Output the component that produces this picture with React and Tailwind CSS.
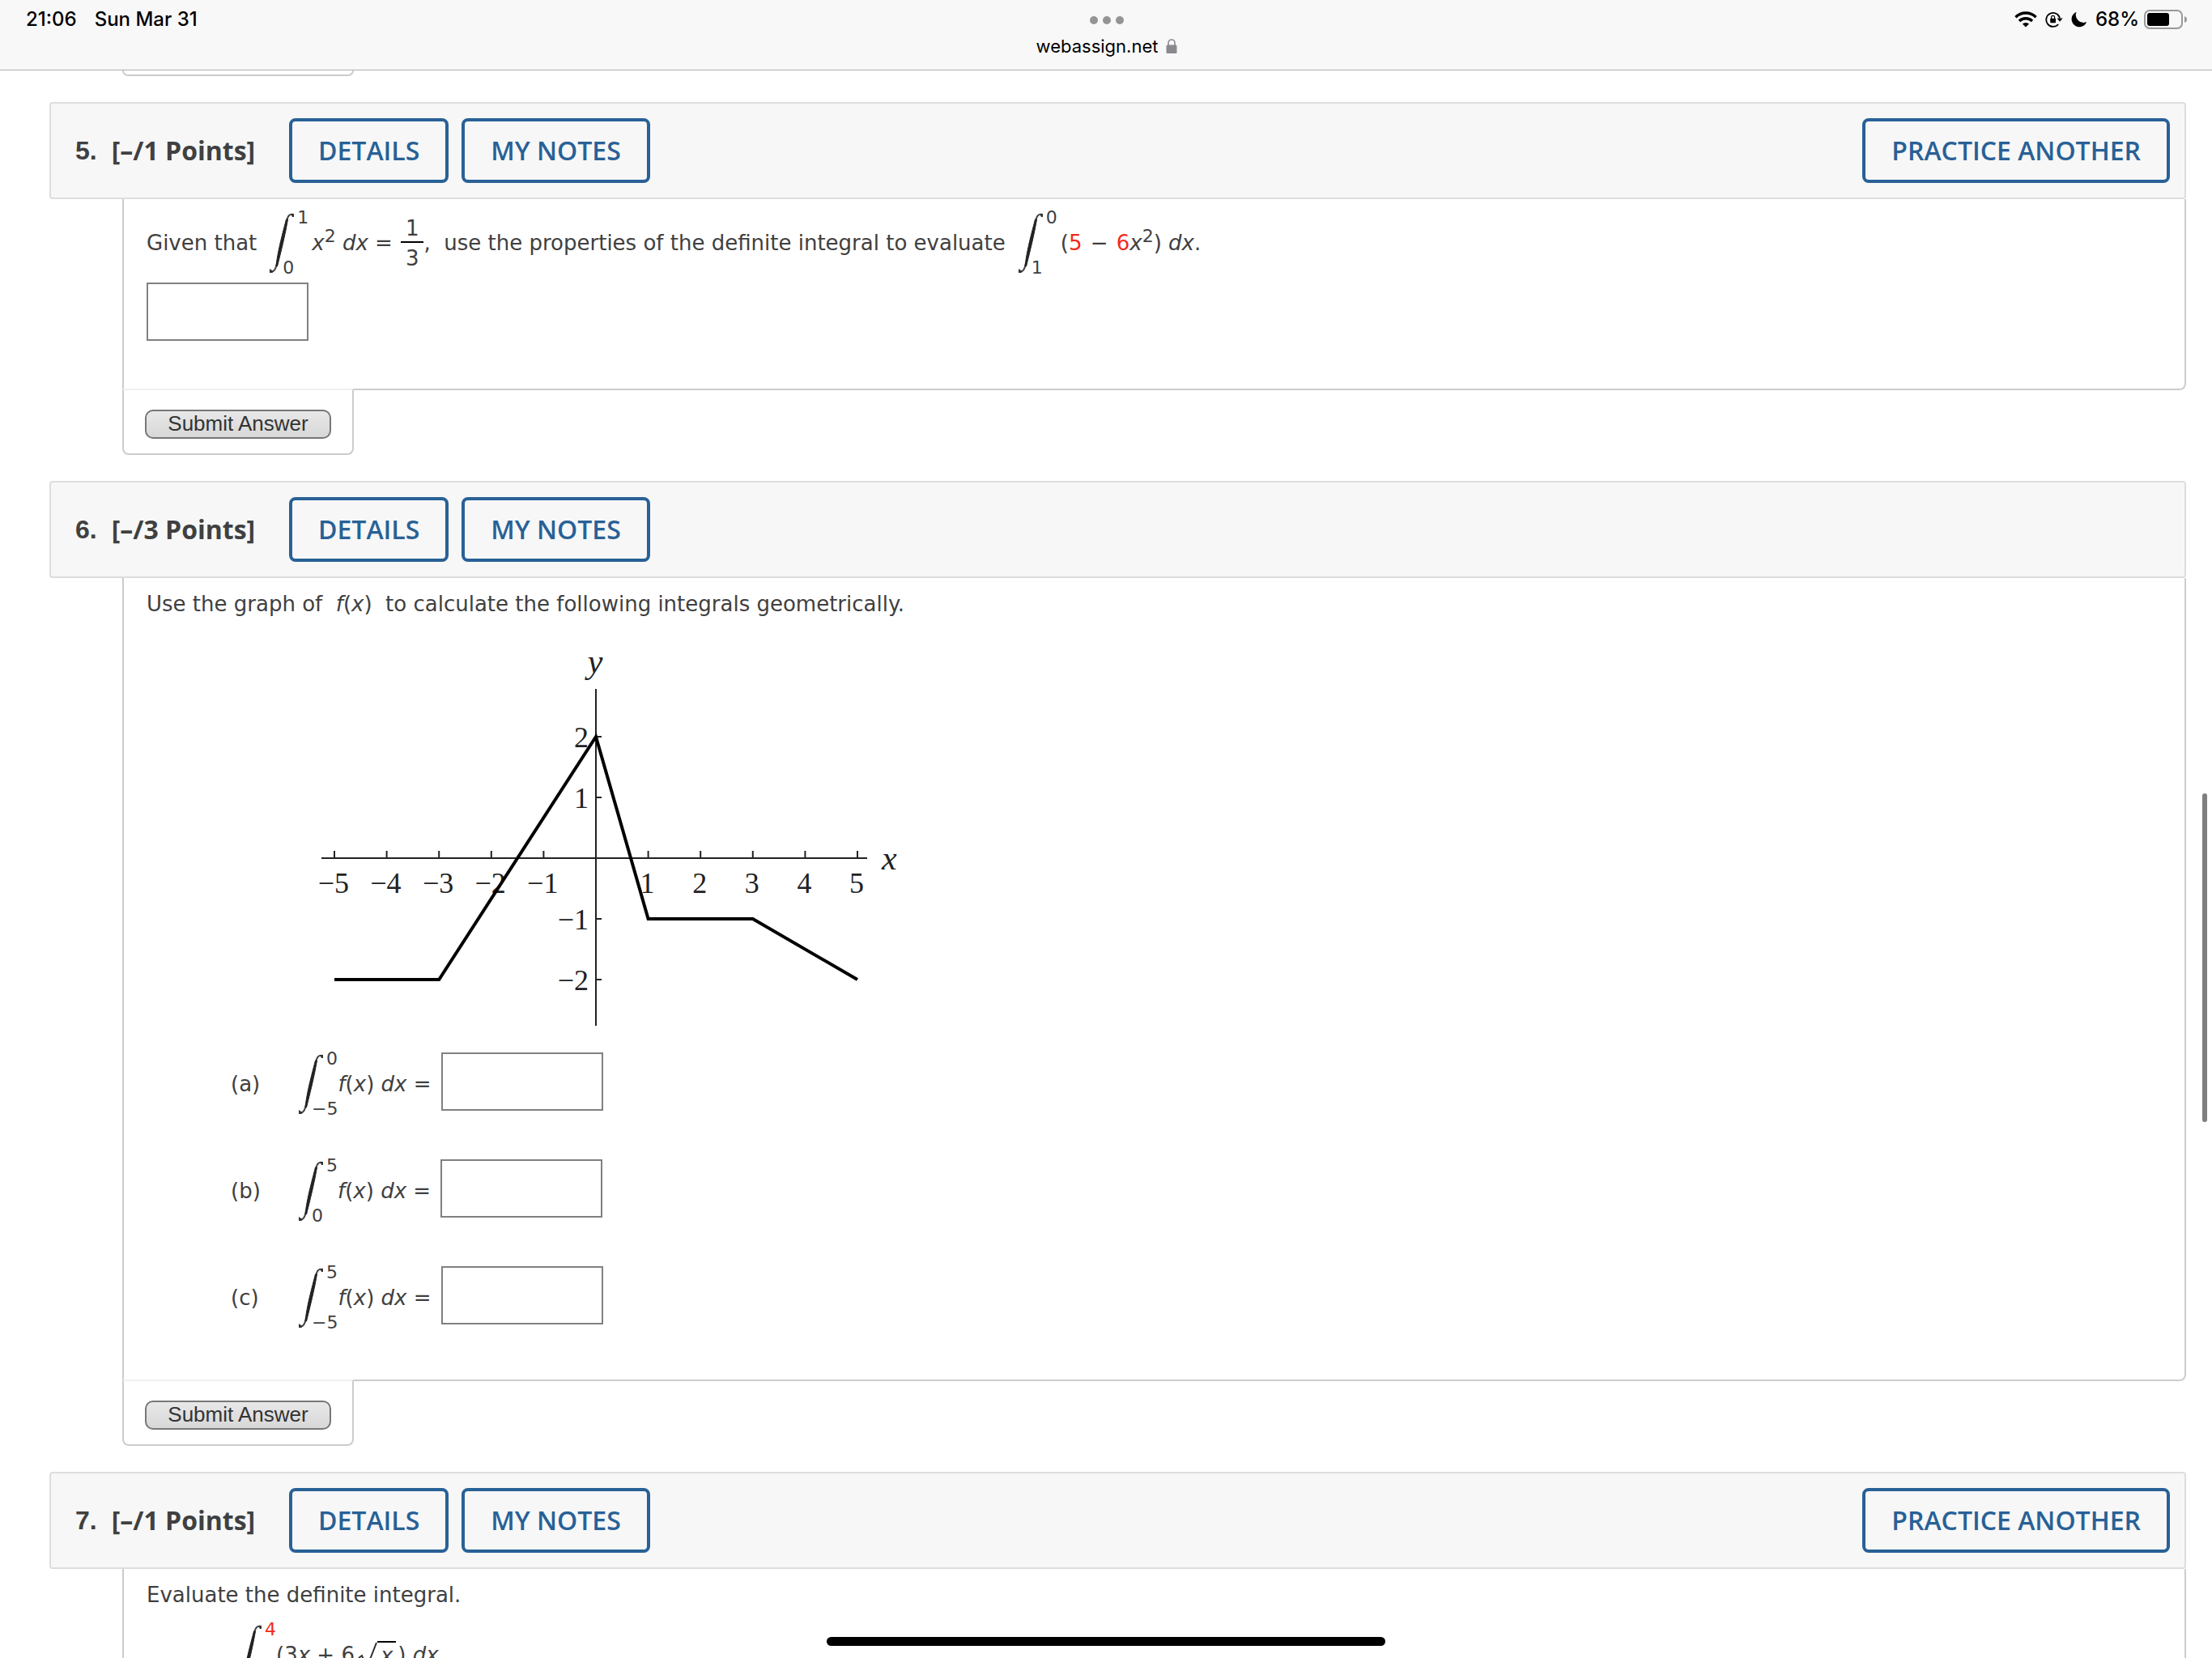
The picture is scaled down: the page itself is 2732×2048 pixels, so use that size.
import React from 'react';
import { clsx } from 'clsx';

const VERDANA = "font-['Verdana','DejaVu_Sans',sans-serif]";
const OPEN_SANS = "font-['Open_Sans',sans-serif]";

const WifiIcon = () => (
    <svg width="28" height="20" viewBox="0 0 28 20" aria-hidden="true">
        <g fill="none" stroke="#000" strokeWidth="3.4">
            <path d="M1.4 7.2 A18 18 0 0 1 26.6 7.2" />
            <path d="M6 12 A11.4 11.4 0 0 1 22 12" />
        </g>
        <path d="M14 19.6 L9.9 15.5 A6 6 0 0 1 18.1 15.5 Z" fill="#000" />
    </svg>
);

const RotationLockIcon = () => (
    <svg width="22" height="20" viewBox="0 0 22 20" aria-hidden="true">
        <path d="M16.2 16 A8.5 8.5 0 1 1 18 8.4" fill="none" stroke="#000" strokeWidth="1.8" />
        <path d="M14.6 8.4 H21.6 L18 12.8 Z" fill="#000" />
        <rect x="6.2" y="8.8" width="6.8" height="5.4" rx="0.8" fill="#000" />
        <path d="M7.6 9 V7.4 A2 2 0 0 1 11.6 7.4 V9" fill="none" stroke="#000" strokeWidth="1.2" />
    </svg>
);

const MoonIcon = () => (
    <svg width="20" height="20" viewBox="0 0 20 20" aria-hidden="true">
        <path d="M6.6 0.8 A9.6 9.6 0 1 0 19.2 13 A9.4 9.4 0 0 1 6.6 0.8 Z" fill="#000" />
    </svg>
);

const BatteryIcon = () => (
    <svg width="54" height="24" viewBox="0 0 54 24" aria-hidden="true">
        <rect x="1" y="1" width="46" height="22" rx="6" fill="none" stroke="#999" strokeWidth="2" />
        <rect x="4" y="4" width="27" height="16" rx="3" fill="#000" />
        <path d="M50 8 Q53 9 53 12 Q53 15 50 16 Z" fill="#999" />
    </svg>
);

const LockIcon = () => (
    <svg width="14" height="18" viewBox="0 0 14 18" aria-hidden="true">
        <rect x="0.5" y="7.5" width="13" height="10.5" rx="1.5" fill="#8a8a8e" />
        <path d="M3 8 V5 A4 4 0 0 1 11 5 V8" fill="none" stroke="#8a8a8e" strokeWidth="1.6" />
    </svg>
);

const StatusBar = () => (
    <header className="relative z-10 grid h-[87px] grid-cols-3 items-start border-b border-[#b0b0b0] bg-[#f8f8f8] pl-8 pr-[30px] pt-3 font-['Inter',sans-serif] text-2xl font-medium leading-6 text-black">
        <div className="flex gap-[22px]">
            <span>21:06</span>
            <span>Sun Mar 31</span>
        </div>
        <div className="flex flex-col items-center pt-2">
            <div className="flex gap-1.5">
                <span className="size-2.5 rounded-full bg-[#949494]" />
                <span className="size-2.5 rounded-full bg-[#949494]" />
                <span className="size-2.5 rounded-full bg-[#949494]" />
            </div>
            <div className="flex items-center gap-2.5 pt-[15px] text-[22px] font-normal leading-6">
                <span>webassign.net</span>
                <LockIcon />
            </div>
        </div>
        <div className="flex items-center justify-end gap-2.5">
            <WifiIcon />
            <RotationLockIcon />
            <MoonIcon />
            <div className="flex items-center gap-1.5">
                <span>68%</span>
                <BatteryIcon />
            </div>
        </div>
    </header>
);

const OutlineButton = ({ children, className }) => (
    <button
        type="button"
        className={clsx('h-20 rounded-lg border-4 border-[#286196] px-8 text-[32px] font-semibold leading-none text-[#286196]', className)}
    >
        {children}
    </button>
);

const QuestionHeader = ({ number, points, practice }) => (
    <div className={clsx('flex h-[120px] items-center rounded border-2 border-[#ddd] bg-[#f7f7f7] pl-[30px] pr-[18px]', OPEN_SANS)}>
        <h2 className="flex w-[264px] items-center gap-[18px] whitespace-nowrap text-[32px] font-bold leading-10 text-[#404040]">
            <span className="font-['Liberation_Sans',Arial,sans-serif]">{number}.</span>
            <span>[–/{points} Points]</span>
        </h2>
        <div className="flex gap-4">
            <OutlineButton>DETAILS</OutlineButton>
            <OutlineButton>MY NOTES</OutlineButton>
        </div>
        {practice && <OutlineButton className="ml-auto">PRACTICE ANOTHER</OutlineButton>}
    </div>
);

const SubmitTab = () => (
    <div className="relative -mt-0.5 ml-[90px] w-fit rounded-b-lg border-2 border-[#ccc] border-t-[#f0f0f0] bg-white px-[26px] pb-[18px] pt-6">
        <button
            type="submit"
            className="flex h-9 w-[230px] items-center justify-center rounded-[10px] border-2 border-[#777] bg-linear-to-b from-[#e8e8e8] to-[#d8d8d8] pb-0.5 font-['Liberation_Sans',Arial,sans-serif] text-[26px] leading-none text-[#333]"
        >
            Submit Answer
        </button>
    </div>
);

const Question = ({ number, points, practice, children }) => (
    <form className="mb-8" onSubmit={(e) => e.preventDefault()}>
        <QuestionHeader number={number} points={points} practice={practice} />
        <div className={clsx('ml-[90px] rounded-br-lg border-2 border-t-0 border-[#ccc] pb-[59px] pl-7 pt-3 text-[26px] leading-10 text-[#404040]', VERDANA)}>
            {children}
        </div>
        <SubmitTab />
    </form>
);

const AnswerInput = ({ label, className, id }) => (
    <input id={id} type="text" aria-label={label} className={clsx('block h-[72px] w-[200px] border-2 border-[#808080] bg-white px-2', className)} />
);

const Integral = ({ from, to, red }) => (
    <span className="flex h-[84px] items-center">
        <svg width="30" height="74" viewBox="0 0 30 74" aria-hidden="true">
            <path d="M21 10 C22.5 3 25 1 29 2 M9 62 C7.5 70 5 73.5 1 72" fill="none" stroke="#444" strokeWidth="2" />
            <path d="M26 1 H30 V5 H28 Z M0 69 L3 71 L4 74 H0 Z" fill="#333" />
            <path d="M20.5 8 C17 22 10 46 8 66 L9.5 66 C14.5 46 19.5 26 22.5 8 Z" fill="#222" stroke="#222" />
        </svg>
        <span className="-ml-3.5 flex h-full flex-col justify-between text-[22px] leading-none">
            <span className={clsx('pl-[18px]', red && 'text-[#f02b1d]')}>{to}</span>
            <span>{from}</span>
        </span>
    </span>
);

const Squared = () => <sup className="-top-2.5 text-[22px] leading-none">2</sup>;

const Fraction = ({ top, bottom }) => (
    <span className="flex flex-col pt-1 text-center">
        <span className="border-b-2 border-black px-1.5 leading-8">{top}</span>
        <span className="leading-[38px]">{bottom}</span>
    </span>
);

const Red = ({ children }) => <span className="text-[#f02b1d]">{children}</span>;

// plot units: 64.6px per x, 75px per y, origin at (356, 280)
const px = (x) => 356 + x * 64.6;
const py = (y) => 280 - y * 75;

const POINTS = [[-5, -2], [-3, -2], [0, 2], [1, -1], [3, -1], [5, -2]];
const X_TICKS = [-5, -4, -3, -2, -1, 1, 2, 3, 4, 5];
const Y_TICKS = [2, 1, -1, -2];

const tickLabel = (n) => String(n).replace('-', '−');

const Graph = () => (
    <svg
        width="740"
        height="500"
        viewBox="0 0 740 500"
        role="img"
        aria-label="Graph of f(x)"
        className="mb-[17px] ml-[199px] mt-3.5 font-['Liberation_Serif',serif]"
    >
        <g stroke="#222" strokeWidth="2">
            <path d="M17 280 H691 M356 71 V487" />
            {X_TICKS.map((x) => <path key={x} d={`M${px(x)} 271 V280`} />)}
            {Y_TICKS.map((y) => <path key={y} d={`M356 ${py(y)} H363`} />)}
        </g>
        <g fill="#222" fontSize="36">
            {X_TICKS.map((x) => (
                <text key={x} x={x < 0 ? px(x) + 18 : px(x) + 8} y="323" textAnchor="end">{tickLabel(x)}</text>
            ))}
            {Y_TICKS.map((y) => (
                <text key={y} x="347" y={py(y) + 13} textAnchor="end">{tickLabel(y)}</text>
            ))}
        </g>
        <g fill="#222" fontSize="42" fontStyle="italic">
            <text x="355" y="51" textAnchor="middle">y</text>
            <text x="709" y="294">x</text>
        </g>
        <polyline points={POINTS.map(([x, y]) => `${px(x)},${py(y)}`).join(' ')} fill="none" stroke="#000" strokeWidth="4" />
    </svg>
);

const PARTS = [
    { key: 'a', from: '−5', to: '0' },
    { key: 'b', from: '0', to: '5' },
    { key: 'c', from: '−5', to: '5' },
];

export default function App() {
    return (
        <div className="relative h-screen overflow-hidden bg-white">
            <StatusBar />
            <main className="ml-[61px] mr-8">
                <div className="mb-8 ml-[90px] h-[7px] w-[286px] rounded-b-lg border-2 border-t-0 border-[#ccc]" />

                <Question number={5} points={1} practice>
                    <div className="flex items-center whitespace-pre">
                        <span className="mr-4">Given that</span>
                        <Integral from="0" to="1" />
                        <span className="ml-1"><i>x</i><Squared /> <i>dx</i> =</span>
                        <span className="ml-2.5"><Fraction top="1" bottom="3" /></span>
                        <span className="mr-4">,  use the properties of the definite integral to evaluate</span>
                        <Integral from="1" to="0" />
                        <span className="ml-1">
                            (<Red>5</Red><span className="px-0.5"> − </span><Red>6</Red><i>x</i><Squared />) <i>dx</i>.
                        </span>
                    </div>
                    <AnswerInput label="Answer" className="mt-[7px]" />
                </Question>

                <Question number={6} points={3}>
                    <p>Use the graph of &nbsp;<i>f</i>(<i>x</i>)&nbsp; to calculate the following integrals geometrically.</p>
                    <Graph />
                    <div className="flex flex-col gap-12 pl-[104px]">
                        {PARTS.map(({ key, from, to }) => (
                            <div key={key} className="flex items-center">
                                <label htmlFor={`part-${key}`} className="w-[84px]">({key})</label>
                                <Integral from={from} to={to} />
                                <span><i>f</i>(<i>x</i>) <i>dx</i> =</span>
                                <AnswerInput id={`part-${key}`} className="ml-3 mt-[3px] self-start" />
                            </div>
                        ))}
                    </div>
                </Question>

                <Question number={7} points={1} practice>
                    <p>Evaluate the definite integral.</p>
                    <div className="flex items-center whitespace-pre pl-28 pt-3">
                        <Integral from="1" to="4" red />
                        <span>(3<i>x</i> + 6</span>
                        <svg width="24" height="36" viewBox="0 0 24 36" className="ml-1" aria-hidden="true">
                            <path d="M1 22 L5 19 L11 34 L23 3" fill="none" stroke="#333" strokeWidth="2" />
                        </svg>
                        <span className="border-t-2 border-black px-1 leading-8"><i>x</i></span>
                        <span className="ml-0.5">) <i>dx</i></span>
                    </div>
                </Question>
            </main>

            <div className="absolute right-1.5 top-[980px] h-[406px] w-1.5 rounded-full bg-[#7f7f7f]" />
            <div className="absolute bottom-[15px] left-1/2 h-[11px] w-[690px] -translate-x-1/2 rounded-full bg-black" />
        </div>
    );
}
